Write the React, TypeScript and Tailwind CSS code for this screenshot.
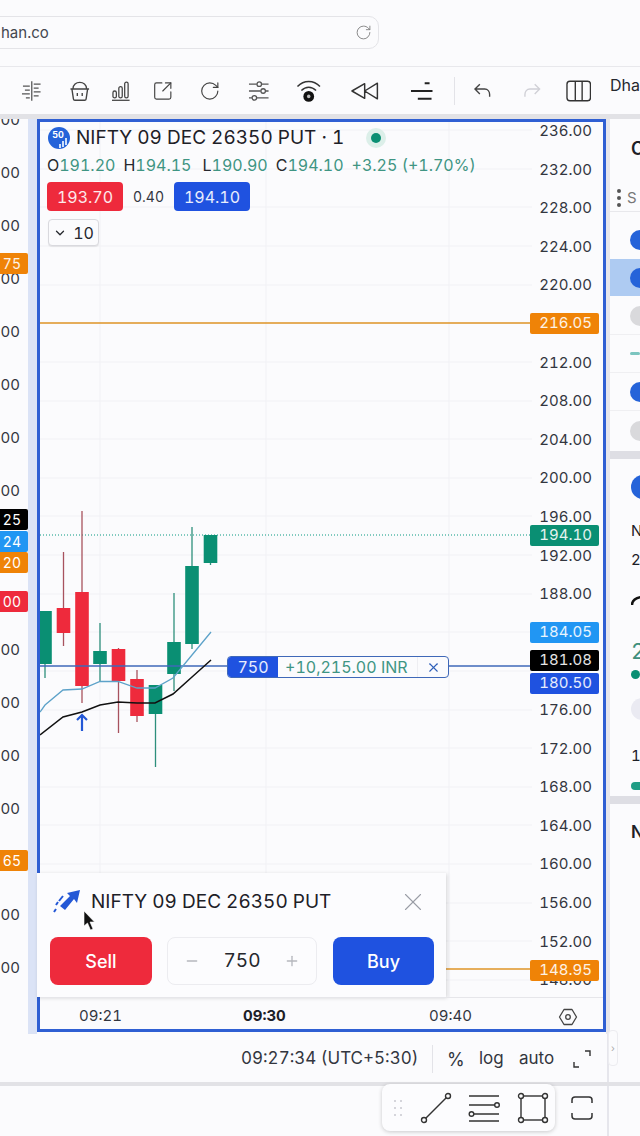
import { RotateCw, SquareArrowOutUpRight, X, Minus, Plus, ChevronDown } from "lucide-react";

const ticks = ["236.00","232.00","228.00","224.00","220.00","","212.00","208.00","204.00","200.00","196.00","192.00","188.00","","","176.00","172.00","168.00","164.00","160.00","156.00","152.00","148.00"];
const gridY = [130,169,207,246,285,323,362,401,439,478,516,555,594,632,671,710,748,787,825,864,903,941,980];

// x, wick top, wick bottom, body top, body bottom
const candles: { x: number; wt: number; wb: number; bt: number; bb: number; up: boolean }[] = [
  { x: 45, wt: 611, wb: 678, bt: 611, bb: 664, up: true },
  { x: 63.5, wt: 552, wb: 646, bt: 608, bb: 633, up: false },
  { x: 82, wt: 511, wb: 703, bt: 592, bb: 686, up: false },
  { x: 100, wt: 623, wb: 681, bt: 651, bb: 664, up: true },
  { x: 118.5, wt: 648, wb: 733, bt: 649, bb: 681, up: false },
  { x: 137, wt: 670, wb: 722, bt: 679, bb: 716, up: false },
  { x: 155.5, wt: 685, wb: 767, bt: 685, bb: 714, up: true },
  { x: 174, wt: 593, wb: 691, bt: 642, bb: 674, up: true },
  { x: 192, wt: 527, wb: 649, bt: 566, bb: 644, up: true },
  { x: 210.5, wt: 535, wb: 565, bt: 535, bb: 563, up: true },
];

function Chart() {
  return (
    <svg className="absolute left-0 top-0" width="563" height="875" viewBox="40 122 563 875">
      {gridY.map((y) => (
        <line key={y} x1="40" x2="532" y1={y} y2={y} stroke="#f1f1f5" strokeWidth="1" />
      ))}
      {[100, 266, 449].map((x) => (
        <line key={x} x1={x} x2={x} y1="122" y2="997" stroke="#f1f1f5" strokeWidth="1" />
      ))}
      <line x1="40" x2="530" y1="323" y2="323" stroke="#df9526" strokeWidth="1.3" />
      <line x1="440" x2="530" y1="969" y2="969" stroke="#df9526" strokeWidth="1.3" />
      <line x1="40" x2="530" y1="535" y2="535" stroke="#089981" strokeWidth="1" strokeDasharray="1 2" />
      {candles.map((c) => {
        const col = c.up ? "#0a8f73" : "#ee2a3c";
        return (
          <g key={c.x}>
            <line x1={c.x} x2={c.x} y1={c.wt} y2={c.wb} stroke={c.up ? "#2d8f7c" : "#a8525e"} strokeWidth="1.3" />
            <rect x={c.x - 6.8} y={c.bt} width="13.6" height={c.bb - c.bt} fill={col} />
          </g>
        );
      })}
      <line x1="40" x2="530" y1="666" y2="666" stroke="#3f68b8" strokeWidth="1.3" />
      <polyline fill="none" stroke="#5da2c9" strokeWidth="1.3" points="40,712 45,705 63,690 82,689 100,681.5 118,681.5 137,688 155,688 173,678 192,655 211,632" />
      <polyline fill="none" stroke="#111" strokeWidth="1.5" points="40,735 63,717 82,712 100,705 118,702 137,703 155,703 173,694 192,677 211,660" />
      <path d="M82 731V715M77 720l5-5 5 5" fill="none" stroke="#2458d6" strokeWidth="2.2" />
    </svg>
  );
}

function Tag({ text, className }: { text: string; className: string }) {
  return (
    <div className={`absolute left-[490px] flex h-[21px] w-[69px] items-center justify-end rounded-[2px] pr-[7px] text-[15px] text-white/90 ${className}`}>
      {text}
    </div>
  );
}

function LeftStrip() {
  // rows that sit under a coloured tag are left empty
  const rows = ["00","00","00","00","00","00","00","00","","","00","00","00","00","","00","00"];
  return (
    <div className="relative w-[37px] shrink-0 overflow-hidden border-r-[9px] border-[#dbe3f6]">
      <div className="-mt-[25px]">
        {rows.map((t, i) => (
          <div key={i} className="flex h-[53px] items-center justify-end pr-[8px] text-[15px] text-[#33363f]">{t}</div>
        ))}
      </div>
      <div className="absolute left-0 top-[134px] flex h-[21px] w-[28px] items-center justify-end rounded-r-[2px] bg-[#ef8307] pr-[7px] text-[14px] text-white/90">75</div>
      <div className="absolute left-0 top-[390px] flex h-[21px] w-[28px] items-center justify-end rounded-r-[2px] bg-black pr-[7px] text-[14px] text-white">25</div>
      <div className="absolute left-0 top-[412px] flex h-[21px] w-[28px] items-center justify-end rounded-r-[2px] bg-[#2196f3] pr-[7px] text-[14px] text-white">24</div>
      <div className="absolute left-0 top-[433px] flex h-[21px] w-[28px] items-center justify-end rounded-r-[2px] bg-[#ef8307] pr-[7px] text-[14px] text-white">20</div>
      <div className="absolute left-0 top-[472px] flex h-[21px] w-[28px] items-center justify-end rounded-r-[2px] bg-[#ee2a3c] pr-[7px] text-[14px] text-white">00</div>
      <div className="absolute left-0 top-[731px] flex h-[21px] w-[28px] items-center justify-end rounded-r-[2px] bg-[#ef8307] pr-[7px] text-[14px] text-white">65</div>
    </div>
  );
}

function Logo({ size = 22 }: { size?: number }) {
  return (
    <svg width={size} height={size} viewBox="0 0 22 22">
      <circle cx="11" cy="11" r="11" fill="#2563d9" />
      <text x="10" y="11" fontSize="9" fontWeight="700" fill="#fff" textAnchor="middle" fontFamily="Inter">50</text>
      <path d="M12 21v-4M15 20v-6M18 18v-7" stroke="#cfe0fb" strokeWidth="2" />
    </svg>
  );
}

function TopToolbar() {
  return (
    <div className="flex h-[47px] shrink-0 items-center text-[#3d4048]">
      <svg className="ml-[21px]" width="22" height="20" viewBox="0 0 22 20" fill="none" stroke="#555" strokeWidth="1.3">
        <path d="M11 0v20M13 3h7M13 7h5M13 11h7M13 15h5M9 5H2M9 9H4M9 13H1M9 17H5" />
      </svg>
      <svg className="ml-[26px]" width="22" height="22" viewBox="0 0 22 22" fill="none" stroke="#444" strokeWidth="1.4">
        <path d="M4 9c0-9 14-9 14 0M1.500 9h19M3 9l1.500 10c.1 1 .8 1.500 1.500 1.500h10c.7 0 1.400-.5 1.500-1.500L19 9M8.500 13v3M13.500 13v3" />
      </svg>
      <svg className="ml-[21px]" width="20" height="20" viewBox="0 0 20 20" fill="none" stroke="#444" strokeWidth="1.3">
        <path d="M1 19.500h18" />
        <rect x="2" y="10" width="3.500" height="7" rx="1.700" />
        <rect x="8" y="5.500" width="3.500" height="11.500" rx="1.700" />
        <rect x="14" y="1" width="3.500" height="16" rx="1.700" />
      </svg>
      <SquareArrowOutUpRight className="ml-[21px]" size={22} strokeWidth={1.3} color="#444" />
      <RotateCw className="ml-[26px]" size={22} strokeWidth={1.3} color="#444" />
      <svg className="ml-[27px]" width="22" height="22" viewBox="0 0 22 22" fill="none" stroke="#555" strokeWidth="1.3">
        <path d="M1 4h8M14 4h7M1 11h12M18 11h3M1 18h3M9 18h12" />
        <circle cx="11.500" cy="4" r="2.300" />
        <circle cx="15.500" cy="11" r="2.300" />
        <circle cx="6.500" cy="18" r="2.300" />
      </svg>
      <svg className="ml-[27px]" width="26" height="26" viewBox="0 0 26 26" fill="none" stroke="#333" strokeWidth="1.500">
        <path d="M1.500 8.500c6.500-7 16.500-7 23 0M5.500 12.500c4.500-4.500 10.500-4.500 15 0" />
        <circle cx="13" cy="18.500" r="5.500" fill="#111" stroke="none" />
        <circle cx="13" cy="18.500" r="1.800" fill="#bbb" stroke="none" />
      </svg>
      <svg className="ml-[28px]" width="30" height="20" viewBox="0 0 30 20" fill="none" stroke="#333" strokeWidth="1.500">
        <path d="M15 2.500L2 10l13 7.500zM28 2L15 10l13 8z" strokeLinejoin="round" />
      </svg>
      <svg className="ml-[31px]" width="24" height="20" viewBox="0 0 24 20" fill="none" stroke="#222" strokeWidth="2">
        <path d="M15 2h5M1 10h22M8 18h14" />
      </svg>
      <div className="ml-[21px] h-[28px] w-px bg-[#e3e3e8]" />
      <svg className="ml-[18px]" width="20" height="18" viewBox="0 0 20 18" fill="none" stroke="#444" strokeWidth="1.400">
        <path d="M7 2L2 7l5 5M2 7h10c3 0 5 2.500 5 5.500V15" />
      </svg>
      <svg className="ml-[29px]" width="20" height="18" viewBox="0 0 20 18" fill="none" stroke="#d0d0d6" strokeWidth="1.400">
        <path d="M13 2l5 5-5 5M18 7H8c-3 0-5 2.500-5 5.500V15" />
      </svg>
      <svg className="ml-[24px]" width="26" height="22" viewBox="0 0 26 22" fill="none" stroke="#333" strokeWidth="1.400">
        <rect x="1" y="1" width="24" height="20" rx="3" />
        <path d="M9.500 1v20M16.500 1v20" />
      </svg>
      <span className="-mt-[11px] ml-[19px] whitespace-nowrap text-[16px] text-[#26282e]">Dha</span>
    </div>
  );
}

function TradePanel() {
  return (
    <div className="absolute left-[-3px] top-[751px] h-[124px] w-[409px] bg-[#fcfcfe] pl-[13px] pr-[12px] shadow-[1px_1px_4px_rgba(0,0,0,0.16)]">
      <div className="flex h-[64px] items-center pb-[6px]">
        <svg width="30" height="26" viewBox="0 0 30 26" className="ml-[2px]" fill="#2458d6">
          <path d="M28 1l-3 13-3-4-9 11-5-4 10-10-3-3z" />
          <path d="M11 7L7 12M6 13l-2 3M4 20l-2 3" stroke="#2458d6" strokeWidth="2" />
        </svg>
        <span className="ml-[9px] whitespace-nowrap text-[19px] text-[#1d2027]">NIFTY 09 DEC 26350 PUT</span>
        <X className="ml-auto mr-[6px]" size={30} strokeWidth={0.9} color="#9a9da6" />
      </div>
      <div className="flex h-[48px] items-stretch">
        <div className="flex w-[102px] items-center justify-center rounded-[8px] bg-[#ee2a3c] text-[18px] font-medium text-white">Sell</div>
        <div className="ml-[15px] flex w-[150px] items-center justify-between rounded-[8px] border border-[#ececf0] px-[16px] text-[#b5b7bd]">
          <Minus size={16} strokeWidth={2} />
          <span className="text-[19px] text-[#25272d]">750</span>
          <Plus size={16} strokeWidth={2} />
        </div>
        <div className="ml-[16px] flex w-[101px] items-center justify-center rounded-[8px] bg-[#1f52e0] text-[18px] font-medium text-white">Buy</div>
      </div>
      <svg className="absolute left-[46px] top-[37px]" width="13" height="22" viewBox="0 0 13 22">
        <path d="M1 1v15l3.500-3 3 7 2.500-1-3-7h4.500z" fill="#111" stroke="#fff" strokeWidth="0.6" />
      </svg>
    </div>
  );
}

function SidePanel() {
  return (
    <div className="flex w-[30px] shrink-0 flex-col overflow-hidden whitespace-nowrap bg-[#dedee4] text-[#1d2027]">
      <div className="h-[332px] bg-[#fbfbfd]">
        <div className="flex h-[58px] items-center pl-[21px] text-[18px] font-semibold">C</div>
        <div className="flex h-[35px] items-center border-b border-[#e8e8ec] pl-[7px] pt-[8px]">
          <div className="flex flex-col gap-[3px]">
            <div className="size-[4px] rounded-full bg-[#555]" />
            <div className="size-[4px] rounded-full bg-[#555]" />
            <div className="size-[4px] rounded-full bg-[#555]" />
          </div>
          <span className="ml-[6px] text-[15px] text-[#777]">S</span>
        </div>
        <div className="flex h-[47px] items-center pl-[20px] pt-[9px]"><div className="size-[20px] shrink-0 rounded-full bg-[#2563d9]" /></div>
        <div className="flex h-[37px] items-center bg-[#aecbf2] pl-[20px]"><div className="size-[20px] shrink-0 rounded-full bg-[#2563d9]" /></div>
        <div className="flex h-[39px] items-center border-b border-[#efeff2] pl-[20px] pt-[2px]"><div className="size-[20px] shrink-0 rounded-full bg-[#d9d9dc]" /></div>
        <div className="flex h-[38px] items-center border-b border-[#efeff2] pl-[20px]"><div className="h-[3px] w-[12px] rounded-full bg-[#7cc5c0]" /></div>
        <div className="flex h-[38px] items-center border-b border-[#efeff2] pl-[20px]"><div className="size-[20px] shrink-0 rounded-full bg-[#2563d9]" /></div>
        <div className="flex h-[39px] items-center pl-[20px]"><div className="size-[20px] shrink-0 rounded-full bg-[#d9d9dc]" /></div>
      </div>
      <div className="mt-[8px] h-[337px] bg-[#fbfbfd] pl-[21px] pt-[16px]">
        <div className="size-[24px] rounded-full bg-[#2563d9]" />
        <div className="mt-[20px] text-[15px] leading-[24px]">N</div>
        <div className="mt-[5px] text-[15px] leading-[24px]">2</div>
        <svg className="mt-[22px]" width="10" height="12" viewBox="0 0 10 12"><path d="M1 11c0-4 3-7 9-8" fill="none" stroke="#111" strokeWidth="2.500" /></svg>
        <div className="mt-[31px] text-[22px] leading-[28px] text-[#3f8f7c]">2</div>
        <div className="mt-[5px] size-[9px] rounded-full bg-[#0a8f73]" />
        <div className="mt-[19px] h-[22px] w-[16px] rounded-l-full bg-[#eaeaf2]" />
        <div className="mt-[25px] text-[15px] leading-[22px]">1</div>
        <div className="mt-[15px] h-[8px] w-[12px] rounded-l-full bg-[#1f9d85]" />
      </div>
      <div className="mt-[8px] flex-1 bg-[#fbfbfd] pl-[21px] pt-[16px] text-[17px] font-semibold">N</div>
    </div>
  );
}

export default function App() {
  return (
    <div className="flex h-[1136px] w-[640px] flex-col overflow-hidden bg-[#fbfbfd] font-['Inter',sans-serif] tabular-nums text-[#1d2027]">
      <div className="h-[67px] shrink-0 border-b border-[#e8e8ec] pt-[16px]">
        <div className="-ml-[10px] flex h-[33px] w-[389px] items-center justify-between rounded-[10px] border border-[#e4e4e8] pl-[10px] pr-[6px] text-[15px] text-[#44474f]">
          <span className="pt-[2px]">han.co</span>
          <RotateCw size={17} strokeWidth={1.2} color="#777" />
        </div>
      </div>
      <TopToolbar />
      <div className="h-[5px] shrink-0 bg-[#e2e2e6]" />

      <div className="flex h-[915px] shrink-0">
        <LeftStrip />
        <div className="h-[913px] w-[569px] shrink-0 border-[3px] border-[#2f5fd3] bg-[#fbfbfd]">
          <div className="relative h-full w-full">
            <Chart />
            <div className="relative h-[875px]">
              <div className="flex items-center pl-[8px] pt-[5px]">
                <Logo />
                <span className="ml-[6px] whitespace-nowrap text-[19px] leading-[22px] text-[#1d2027]">NIFTY 09 DEC 26350 PUT · 1</span>
                <div className="ml-[22px] flex size-[20px] items-center justify-center rounded-full bg-[#dcefe9]">
                  <div className="size-[10px] rounded-full bg-[#0a8f73]" />
                </div>
              </div>
              <div className="mt-[4px] flex whitespace-nowrap pl-[7px] text-[16px] leading-[24px] text-[#3f9583]">
                <span className="text-[#26282e]">O</span><span>191.20</span>
                <span className="ml-[8px] text-[#26282e]">H</span><span>194.15</span>
                <span className="ml-[11px] text-[#26282e]">L</span><span>190.90</span>
                <span className="ml-[8px] text-[#26282e]">C</span><span>194.10</span>
                <span className="ml-[8px]">+3.25 (+1.70%)</span>
              </div>
              <div className="mt-[5px] flex items-center pl-[7px]">
                <div className="flex h-[29px] w-[76px] items-center justify-center rounded-[4px] bg-[#ee2a3c] text-[16px] text-white/90">193.70</div>
                <span className="w-[51px] text-center text-[14px] text-[#33363f]">0.40</span>
                <div className="flex h-[29px] w-[76px] items-center justify-center rounded-[4px] bg-[#1f52e0] text-[16px] text-white/90">194.10</div>
              </div>
              <div className="ml-[8px] mt-[8px] flex h-[27px] w-[51px] items-center justify-center gap-[6px] rounded-[4px] border border-[#d9d9de] bg-[#fbfbfd] text-[16px] text-[#26282e] shadow-[0_1px_1px_rgba(0,0,0,0.08)]">
                <ChevronDown size={14} strokeWidth={2.2} />
                10
              </div>

              <div className="absolute left-[492px] top-[-10px] w-[60px] text-right text-[15px] text-[#33363f]">
                {ticks.map((t, i) => (
                  <div key={i} className="flex h-[38.6px] items-center justify-end">{t}</div>
                ))}
              </div>

              <Tag text="216.05" className="top-[191px] bg-[#ef8307]" />
              <Tag text="194.10" className="top-[403px] bg-[#0a8f73]" />
              <Tag text="184.05" className="top-[500px] bg-[#2196f3]" />
              <Tag text="181.08" className="top-[528px] bg-black" />
              <Tag text="180.50" className="top-[551px] bg-[#1f52e0]" />
              <Tag text="148.95" className="top-[838px] bg-[#ef8307]" />

              <div className="absolute left-[187px] top-[534px] flex h-[22px] w-[222px] items-center overflow-hidden rounded-[4px] border-[1.5px] border-[#3f68b8] bg-[#fbfbfd] text-[16px]">
                <div className="flex h-full w-[50px] items-center justify-center bg-[#1f52e0] text-white/90">750</div>
                <span className="ml-[7px] whitespace-nowrap text-[#3f9583]">+10,215.00 INR</span>
                <div className="ml-auto flex h-full w-[31px] items-center justify-center border-l border-[#eeeef2]">
                  <X size={15} strokeWidth={1.700} color="#2f5fb8" />
                </div>
              </div>

              <TradePanel />
            </div>
            <div className="relative flex h-[32px] items-center border-t border-[#e6e6ea] pt-[6px] text-[15px] text-[#33363f]">
              <span className="absolute left-[39px]">09:21</span>
              <span className="absolute left-[203px] font-bold text-[#1d2027]">09:30</span>
              <span className="absolute left-[389px]">09:40</span>
              <svg className="absolute left-[518px]" width="20" height="20" viewBox="0 0 20 20" fill="none" stroke="#444" strokeWidth="1.300">
                <path d="M6 2.500h8L18.500 10 14 17.500H6L1.500 10z" strokeLinejoin="round" />
                <circle cx="10" cy="10" r="2.300" />
              </svg>
            </div>
          </div>
        </div>
        <div className="w-[4px] shrink-0 bg-[#e6e6ec]" />
        <SidePanel />
      </div>

      <div className="relative flex h-[48px] w-[609px] shrink-0 items-center border-r-[2px] border-[#e6e6ec] pt-[2px] text-[17px] text-[#33363f]">
        <span className="ml-[241px] whitespace-nowrap">09:27:34 (UTC+5:30)</span>
        <div className="absolute left-[432px] h-[28px] w-px bg-[#e3e3e8]" />
        <span className="absolute left-[447px] text-[18px]">%</span>
        <span className="absolute left-[479px]">log</span>
        <span className="absolute left-[519px]">auto</span>
        <svg className="absolute left-[572px]" width="20" height="20" viewBox="0 0 20 20" fill="none" stroke="#333" strokeWidth="1.400">
          <path d="M13 2h5v5M2 13v5h5" />
        </svg>
        <div className="absolute left-[608px] top-[-4px] flex h-[36px] w-[10px] items-center justify-center rounded-[4px] border border-[#ececf0] bg-[#fbfbfd] text-[10px] text-[#aaa]">›</div>
      </div>
      <div className="h-[4px] shrink-0 bg-[#e2e2e6]" />
      <div className="relative w-[609px] flex-1 border-r-[2px] border-[#e6e6ec]">
        <div className="absolute left-[382px] top-[-2px] flex h-[47px] w-[173px] items-center rounded-[8px] bg-[#fcfcfe] shadow-[0_1px_4px_rgba(0,0,0,0.2)]">
          <svg className="ml-[11px]" width="10" height="18" viewBox="0 0 10 18" fill="#c9c9cf">
            <circle cx="2" cy="2" r="1" /><circle cx="8" cy="2" r="1" />
            <circle cx="2" cy="9" r="1" /><circle cx="8" cy="9" r="1" />
            <circle cx="2" cy="16" r="1" /><circle cx="8" cy="16" r="1" />
          </svg>
          <svg className="ml-[17px]" width="32" height="32" viewBox="0 0 32 32" fill="none" stroke="#333" strokeWidth="1.400">
            <circle cx="4" cy="28" r="2.500" /><circle cx="28" cy="4" r="2.500" />
            <path d="M6 26L26 6" />
          </svg>
          <svg className="ml-[16px]" width="32" height="32" viewBox="0 0 32 32" fill="none" stroke="#333" strokeWidth="1.400">
            <path d="M1 4h30M1 13h26M6 22h25M1 29h30" />
            <circle cx="29" cy="13" r="2.300" /><circle cx="3.500" cy="22" r="2.300" />
          </svg>
          <svg className="ml-[17px]" width="32" height="32" viewBox="0 0 32 32" fill="none" stroke="#333" strokeWidth="1.400">
            <rect x="4" y="4" width="24" height="24" />
            <circle cx="4" cy="4" r="2.500" fill="#fcfcfe" /><circle cx="28" cy="4" r="2.500" fill="#fcfcfe" />
            <circle cx="4" cy="28" r="2.500" fill="#fcfcfe" /><circle cx="28" cy="28" r="2.500" fill="#fcfcfe" />
          </svg>
        </div>
        <svg className="absolute left-[571px] top-[10px]" width="22" height="24" viewBox="0 0 22 24" fill="none" stroke="#333" strokeWidth="1.500">
          <path d="M1 7V4c0-1.500 1-3 3-3h14c2 0 3 1.500 3 3v3M1 17v3c0 1.500 1 3 3 3h14c2 0 3-1.500 3-3v-3" />
        </svg>
      </div>
    </div>
  );
}
